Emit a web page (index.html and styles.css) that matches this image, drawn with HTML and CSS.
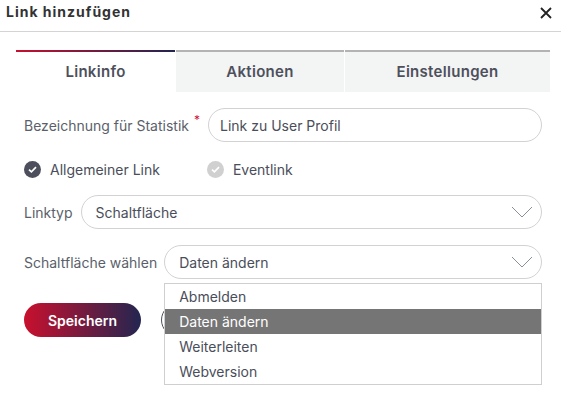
FILE: index.html
```html
<!DOCTYPE html>
<html lang="de">
<head>
<meta charset="utf-8">
<title>Link hinzufügen</title>
<link rel="stylesheet" href="styles.css">
</head>
<body>
<div class="dialog">
	<div class="dialog-head">
		<span class="dialog-title">Link hinzufügen</span>
		<span class="dialog-close">
			<svg width="12" height="12" viewBox="0 0 12 12"><path d="M1 1 L11 11 M11 1 L1 11" stroke="#222" stroke-width="1.8" fill="none"/></svg>
		</span>
	</div>

	<div class="tabs">
		<div class="tab active">Linkinfo</div>
		<div class="tab">Aktionen</div>
		<div class="tab">Einstellungen</div>
	</div>

	<div class="form">
		<div class="row row-first">
			<label class="lbl">Bezeichnung für Statistik<span class="req">*</span></label>
			<div class="field">Link zu User Profil</div>
		</div>

		<div class="row radios">
			<div class="radio">
				<span class="dot on"><svg width="9" height="7" viewBox="0 0 9 7"><path d="M1 3.6 L3.4 5.8 L8 1.2" stroke="#fff" stroke-width="1.7" fill="none"/></svg></span>
				Allgemeiner Link
			</div>
			<div class="radio radio-two">
				<span class="dot"><svg width="9" height="7" viewBox="0 0 9 7"><path d="M1 3.6 L3.4 5.8 L8 1.2" stroke="#fff" stroke-width="1.7" fill="none"/></svg></span>
				Eventlink
			</div>
		</div>

		<div class="row">
			<label class="lbl">Linktyp</label>
			<div class="field select">
				<span>Schaltfläche</span>
				<svg class="chev" width="22" height="12" viewBox="0 0 22 12"><path d="M1 1 L11 11 L21 1" stroke="#8b8f9a" stroke-width="1" fill="none"/></svg>
			</div>
		</div>

		<div class="row row-pick">
			<label class="lbl">Schaltfläche wählen</label>
			<div class="field select">
				<span>Daten ändern</span>
				<svg class="chev" width="22" height="12" viewBox="0 0 22 12"><path d="M1 1 L11 11 L21 1" stroke="#8b8f9a" stroke-width="1" fill="none"/></svg>
				<ul class="dropdown">
					<li>Abmelden</li>
					<li class="sel">Daten ändern</li>
					<li>Weiterleiten</li>
					<li>Webversion</li>
				</ul>
			</div>
		</div>

		<div class="buttons">
			<button class="btn btn-save" type="button">Speichern</button>
			<button class="btn btn-cancel" type="button"></button>
		</div>
	</div>
</div>
</body>
</html>
```

FILE: styles.css
```css
html, body {
	margin: 0;
	padding: 0;
	background: #fff;
}

body {
	font-family: Inter, "Noto Sans", sans-serif;
	color: #5b5f6b;
	font-size: 14px;
}

.dialog {
	width: 561px;
	min-height: 397px;
}

.dialog-head {
	height: 31px;
	padding: 0 9px 0 6px;
	display: flex;
	justify-content: space-between;
	align-items: flex-start;
	border-bottom: 1px solid #d4d4d4;
}
.dialog-title {
	font-size: 14px;
	font-weight: 700;
	letter-spacing: 1px;
	color: #333;
	padding-top: 3px;
}
.dialog-close {
	padding-top: 5px;
}

.tabs {
	display: grid;
	grid-template-columns: 159px 169px 1fr;
	margin: 18px 11px 0 16px;
	height: 42px;
}
.tab {
	background: #f3f4f4;
	border-top: 2px solid #b3b3b3;
	display: flex;
	align-items: center;
	justify-content: center;
	font-size: 15px;
	font-weight: 600;
	letter-spacing: 0.3px;
	color: #4d505c;
	padding-bottom: 1px;
}
.tab + .tab {
	margin-left: 1px;
}
.tab.active {
	background: #fff;
	border-top: 0;
	padding-top: 2px;
	background-image: linear-gradient(90deg, #c8102e, #1f2550);
	background-size: 100% 2px;
	background-repeat: no-repeat;
}

.form {
	padding: 0 19px 0 24px;
}
.row {
	display: flex;
	align-items: center;
	margin-top: 16px;
}
.lbl {
	white-space: nowrap;
	margin-right: 8px;
}
.req {
	color: #d0143c;
	font-size: 12px;
	position: relative;
	top: -7px;
	margin-left: 5px;
}
.field {
	flex: 1;
	height: 32px;
	border: 1px solid #d2d2d2;
	border-radius: 17px;
	display: flex;
	align-items: center;
	padding: 0 11px;
	color: #4a4e5a;
	position: relative;
}
.select {
	padding-left: 14px;
	justify-content: space-between;
}
.chev {
	margin-right: -3px;
}

.radios {
	margin-top: 17px;
	height: 20px;
}
.radio {
	display: flex;
	align-items: center;
	color: #4a4e5a;
}
.radio-two {
	margin-left: 47px;
}
.dot {
	width: 17px;
	height: 17px;
	border-radius: 50%;
	background: #d0d0d0;
	display: flex;
	align-items: center;
	justify-content: center;
	margin-right: 9px;
}
.dot.on {
	background: #4d505c;
}

.row-pick .lbl {
	margin-right: 7px;
}

.dropdown {
	position: absolute;
	top: 37px;
	left: -1px;
	right: -1px;
	margin: 0;
	padding: 0;
	list-style: none;
	background: #fff;
	border: 1px solid #cfcfcf;
	z-index: 5;
}
.dropdown li {
	height: 25px;
	line-height: 25px;
	padding-left: 14px;
	color: #4a4e5a;
}
.dropdown li.sel {
	background: #757575;
	color: #fff;
}

.buttons {
	display: flex;
	margin-top: 24px;
}
.btn {
	height: 34px;
	border-radius: 17px;
	font-family: Inter, "Noto Sans", sans-serif;
	font-size: 14px;
	font-weight: 600;
	padding: 0;
}
.btn-save {
	width: 117px;
	border: 0;
	color: #fff;
	background: linear-gradient(90deg, #c8102e, #232650);
}
.btn-cancel {
	margin-left: 20px;
	width: 120px;
	border: 1px solid #4d505c;
	background: #fff;
	color: #4d505c;
}
```
